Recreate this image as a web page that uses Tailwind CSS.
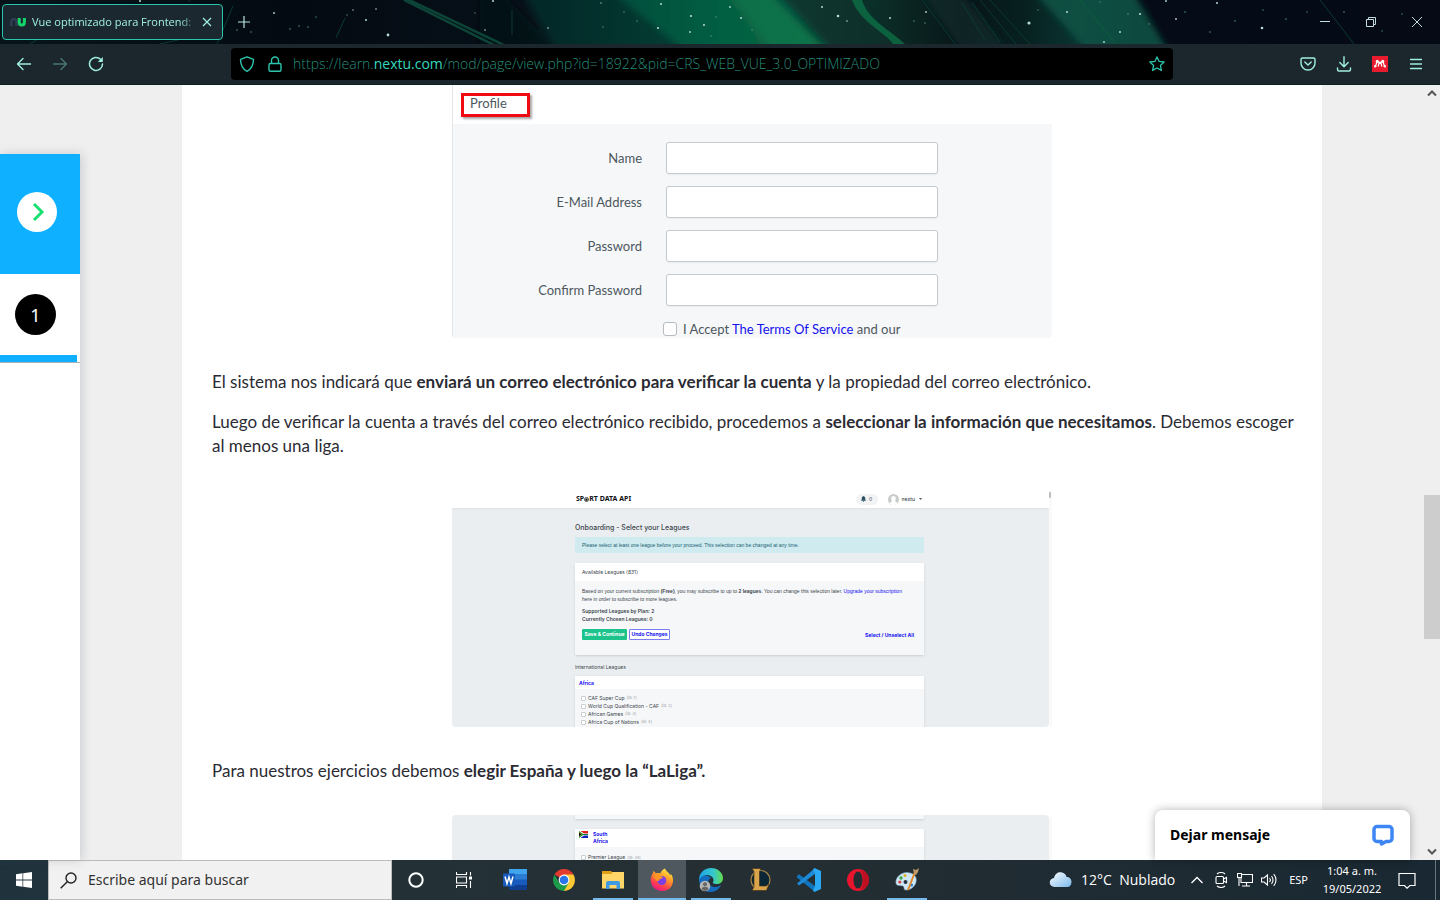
<!DOCTYPE html>
<html lang="es">
<head>
<meta charset="utf-8">
<title>Vue optimizado para Frontend</title>
<script src="https://cdn.jsdelivr.net/npm/@tailwindcss/browser@4"></script>
</head>
<body class="flex h-screen flex-col overflow-hidden bg-[#efefef] font-['Noto_Sans','Open_Sans',sans-serif]">

<!-- Tab strip -->
<header class="relative flex h-11 shrink-0 items-center bg-[#050b14] text-[#a0f0e0]">
  <svg class="absolute inset-0 h-full w-full" viewBox="0 0 1440 44" preserveAspectRatio="none" aria-hidden="true">
    <defs>
      <linearGradient id="sky" x1="0" x2="1">
        <stop offset="0" stop-color="#06141a"/><stop offset=".2" stop-color="#040a12"/><stop offset=".36" stop-color="#060f18"/><stop offset=".42" stop-color="#07302c"/><stop offset=".48" stop-color="#08503f"/><stop offset=".55" stop-color="#085440"/><stop offset=".58" stop-color="#0b3a30"/><stop offset=".63" stop-color="#0a2522"/><stop offset=".67" stop-color="#081519"/><stop offset=".71" stop-color="#07201f"/><stop offset=".75" stop-color="#093532"/><stop offset=".79" stop-color="#050c17"/><stop offset="1" stop-color="#050a15"/>
      </linearGradient>
      <linearGradient id="beam" x1="0" x2="1"><stop offset="0" stop-color="#065040"/><stop offset=".8" stop-color="#086a43"/><stop offset="1" stop-color="#0a7347"/></linearGradient>
      <filter id="soft" x="-10%" y="-30%" width="120%" height="160%"><feGaussianBlur stdDeviation="3"/></filter>
    </defs>
    <rect width="1440" height="44" fill="url(#sky)"/>
    <g filter="url(#soft)">
      <path d="M560 54L500 -10H480V54Z" fill="#060f18" opacity=".6"/>
      <path d="M560 54H690L610 -10H520Z" fill="#07302c" opacity=".6"/>
      <path d="M610 -10H765L832 54H690Z" fill="url(#beam)" opacity=".85"/>
      <path d="M725 -10H768L824 54H775Z" fill="#0b7a4c" opacity=".6"/>
      <path d="M775 -10H850L900 54H836Z" fill="#0a2f2a" opacity=".8"/>
      <path d="M920 -10H960L1010 54H965Z" fill="#0b2b2b" opacity=".6"/>
      <path d="M1032 -10H1132L1170 54H1090Z" fill="#0a5345" opacity=".85"/>
    </g>
    <path d="M852 0H862C868 20 890 30 905 44H893C885 32 860 22 852 0Z" fill="#0c6f45" opacity=".8"/>
    <path d="M1080 0L1116 44" stroke="#0b5e3c"/>
    <path d="M405 -2L506 46M404 0L500 48" stroke="#0d4438" stroke-width="2.5" fill="none"/>
    <path d="M233 6L217 44M345 18L336 38M30 44L40 38M160 44L178 40M188 2L190 0M512 10V35M962 3L985 40M972 3L1000 42M1320 0L1354 44" stroke="#0b3a35" fill="none"/>
    <path d="M980 0L1016 44M990 0L1030 44M922 0L955 44M790 0L828 44" stroke="#0d4a3d" stroke-width="1" opacity=".6"/>
    <g fill="#b5d9d4">
      <circle cx="274" cy="13" r=".9"/><circle cx="140" cy="1" r="1"/><circle cx="388" cy="35" r="1.4"/><circle cx="366" cy="20" r="1"/><circle cx="376" cy="9" r=".8"/><circle cx="353" cy="10" r=".7"/><circle cx="485" cy="30" r=".8"/><circle cx="493" cy="1" r="1"/><circle cx="548" cy="28" r=".8"/><circle cx="658" cy="28" r="1.1"/><circle cx="661" cy="4" r="1"/><circle cx="691" cy="16" r="1.1"/><circle cx="704" cy="25" r="1"/><circle cx="690" cy="32" r=".9"/><circle cx="741" cy="18" r="1"/><circle cx="730" cy="7" r=".9"/><circle cx="822" cy="7" r="1"/><circle cx="838" cy="16" r="1.3"/><circle cx="847" cy="21" r=".8"/><circle cx="890" cy="18" r="1"/><circle cx="926" cy="12" r=".9"/><circle cx="1029" cy="23" r="1.6"/><circle cx="1067" cy="12" r="1"/><circle cx="1140" cy="14" r="1.1"/><circle cx="1120" cy="32" r="1"/><circle cx="1217" cy="3" r="1"/><circle cx="1262" cy="28" r="1.3"/><circle cx="1176" cy="19" r=".9"/><circle cx="1104" cy="42" r=".9"/><circle cx="1166" cy="1" r=".9"/>
    </g>
    <g fill="#4e8b83">
      <circle cx="237" cy="30" r=".8"/><circle cx="251" cy="32" r=".8"/><circle cx="290" cy="29" r=".8"/><circle cx="299" cy="26" r=".8"/><circle cx="308" cy="27" r=".8"/><circle cx="316" cy="17" r=".7"/><circle cx="347" cy="15" r=".7"/><circle cx="475" cy="13" r=".7"/><circle cx="601" cy="3" r=".9"/><circle cx="624" cy="12" r=".8"/><circle cx="603" cy="27" r=".8"/><circle cx="637" cy="21" r=".8"/><circle cx="716" cy="17" r=".8"/><circle cx="711" cy="36" r=".8"/><circle cx="752" cy="30" r=".8"/><circle cx="914" cy="21" r=".8"/><circle cx="925" cy="23" r=".8"/><circle cx="1038" cy="10" r=".7"/><circle cx="1100" cy="2" r=".7"/><circle cx="1128" cy="14" r=".8"/><circle cx="1149" cy="24" r=".8"/><circle cx="1185" cy="12" r=".8"/><circle cx="1210" cy="32" r=".8"/><circle cx="1235" cy="21" r=".8"/><circle cx="1263" cy="10" r=".7"/><circle cx="1286" cy="19" r=".8"/><circle cx="1307" cy="12" r=".7"/><circle cx="1344" cy="12" r=".8"/><circle cx="1402" cy="14" r=".7"/><circle cx="1382" cy="31" r=".7"/>
    </g>
  </svg>
  <div class="relative ml-[2px] flex h-9 w-[221px] items-center rounded border border-[#2cc5ae] bg-[#1c282f] pr-[7px] pl-[7px]">
    <svg class="h-4 w-4 shrink-0" viewBox="0 0 16 16" fill="none" stroke-width="2.6" aria-hidden="true"><path d="M1.3 12V8a2.6 3 0 0 1 5.2 0v4" stroke="#2d3d52"/><path d="M9.2 4v4.500a2.600 2.600 0 0 0 5.200 0V4" stroke="#13d66b" stroke-width="3"/></svg>
    <span class="ml-[6px] flex-1 overflow-hidden font-['Open_Sans',sans-serif] text-[11px] whitespace-nowrap [mask-image:linear-gradient(to_right,black_88%,transparent)]">Vue optimizado para Frontend:</span>
    <button aria-label="Cerrar pestaña"><svg class="h-4 w-4" viewBox="0 0 16 16" stroke="currentColor" stroke-width="1.2"><path d="M4 4l8 8M12 4l-8 8"/></svg></button>
  </div>
  <button aria-label="Nueva pestaña" class="relative ml-[13px]"><svg class="h-4 w-4" viewBox="0 0 16 16" stroke="#b7e6df" stroke-width="1.2"><path d="M8 2v12M2 8h12"/></svg></button>
  <div class="relative ml-auto flex text-[#c4dedd]">
    <button aria-label="Minimizar" class="flex w-[46px] justify-center"><svg class="h-4 w-4" viewBox="0 0 16 16" stroke="currentColor"><path d="M3 7.500h10"/></svg></button>
    <button aria-label="Restaurar" class="flex w-[46px] justify-center"><svg class="h-4 w-4" viewBox="0 0 16 16" fill="none" stroke="currentColor"><path d="M3.500 5.500h7v7h-7zM5.500 5.500v-2h7v7h-2"/></svg></button>
    <button aria-label="Cerrar" class="flex w-[46px] justify-center"><svg class="h-4 w-4" viewBox="0 0 16 16" stroke="currentColor"><path d="M3 3l10 10M13 3L3 13"/></svg></button>
  </div>
</header>

<!-- Navigation toolbar -->
<nav class="flex h-[41px] shrink-0 items-center border-b border-[#09221f] bg-[#1c262d] text-[#a0f0e0]">
  <div class="flex w-[231px] shrink-0 gap-5 pl-4">
    <button aria-label="Atrás"><svg class="h-4 w-4" viewBox="0 0 16 16" fill="none" stroke="currentColor" stroke-width="1.4" stroke-linecap="round" stroke-linejoin="round"><path d="M14.500 8h-13M7 2.500L1.500 8 7 13.500"/></svg></button>
    <button aria-label="Adelante" class="text-[#4a7573]"><svg class="h-4 w-4" viewBox="0 0 16 16" fill="none" stroke="currentColor" stroke-width="1.4" stroke-linecap="round" stroke-linejoin="round"><path d="M1.500 8h13M9 2.500L14.500 8 9 13.500"/></svg></button>
    <button aria-label="Recargar"><svg class="h-4 w-4" viewBox="0 0 16 16" fill="none" stroke="currentColor" stroke-width="1.5" stroke-linecap="round"><path d="M12.500 3.200A6.500 6.500 0 1 0 14.500 8"/><path d="M14.800 1v5h-5z" fill="currentColor" stroke="none"/></svg></button>
  </div>
  <div class="flex h-8 w-[942px] items-center rounded bg-black px-2 text-[#2cc5ae]">
    <svg class="h-4 w-4 shrink-0" viewBox="0 0 16 16" fill="none" stroke="currentColor" stroke-width="1.4" stroke-linejoin="round" aria-hidden="true"><path d="M8 .8l6.500 2.500c0 5-1.500 9.500-6.500 12-5-2.500-6.500-7-6.500-12z"/></svg>
    <svg class="ml-3 h-4 w-4 shrink-0" viewBox="0 0 16 16" fill="none" stroke="currentColor" stroke-width="1.400" aria-hidden="true"><rect x="2" y="7.500" width="12" height="7.800" rx="1.500"/><path d="M4.500 7.500v-3a3.500 3.500 0 0 1 7 0v3"/></svg>
    <a href="#" class="ml-[10px] flex-1 font-['Open_Sans',sans-serif] text-sm font-light whitespace-nowrap text-[#278c7a]">https://learn.<span class="font-normal text-[#35d8be]">nextu.com</span>/mod/page/view.php?id=18922&amp;pid=CRS_WEB_VUE_3.0_OPTIMIZADO</a>
    <button aria-label="Añadir a marcadores"><svg class="h-4 w-4" viewBox="0 0 16 16" fill="none" stroke="currentColor" stroke-width="1.300" stroke-linejoin="round"><path d="M8 .9l2.100 4.500 5 .6-3.700 3.400 1 5L8 12l-4.400 2.400 1-5L.9 6l5-.6z"/></svg></button>
  </div>
  <div class="ml-auto flex gap-5 pr-4">
    <button aria-label="Pocket"><svg class="h-4 w-4" viewBox="0 0 16 16" fill="none" stroke="currentColor" stroke-width="1.400" stroke-linecap="round" stroke-linejoin="round"><path d="M2.500 2h11a1.500 1.500 0 0 1 1.500 1.500V7A7 7 0 0 1 1 7V3.500A1.500 1.500 0 0 1 2.500 2z"/><path d="M4.800 6L8 9l3.200-3"/></svg></button>
    <button aria-label="Descargas"><svg class="h-4 w-4" viewBox="0 0 16 16" fill="none" stroke="currentColor" stroke-width="1.400" stroke-linecap="round" stroke-linejoin="round"><path d="M8 .8v9.700M3.800 6.500L8 10.700l4.200-4.200M1.500 12v1.500A1.500 1.500 0 0 0 3 15h10a1.500 1.500 0 0 0 1.500-1.500V12"/></svg></button>
    <button aria-label="Mendeley"><svg class="h-4 w-4" viewBox="0 0 16 16" fill="#fff"><rect width="16" height="16" fill="#e81c2e"/><circle cx="5.300" cy="5.300" r="1.500"/><circle cx="10.700" cy="5.300" r="1.500"/><path d="M5 5.500L3.800 9.500M11 5.500l1.200 4M5.800 6L8 6.800l2.200-.8M7 7l-.8 3.500M9 7l.8 3.500" fill="none" stroke="#fff" stroke-width="1.200"/><circle cx="3.200" cy="10.300" r="1.200"/><circle cx="12.800" cy="10.300" r="1.200"/><circle cx="8" cy="6.800" r="1.200"/></svg></button>
    <button aria-label="Menú"><svg class="h-4 w-4" viewBox="0 0 16 16" stroke="currentColor" stroke-width="1.300" stroke-linecap="round"><path d="M2.500 3.500h11M2.500 8h11M2.500 12.500h11"/></svg></button>
  </div>
</nav>

<!-- Web page -->
<div class="relative flex min-h-0 flex-1">
  <aside class="relative mt-[69px] flex w-20 shrink-0 flex-col bg-white shadow-[2px_0_10px_rgba(60,70,90,0.2)]">
    <div class="flex h-[120px] items-center bg-[#0fb0ff] pb-1 pl-[17px]">
      <button aria-label="Abrir menú" class="flex h-10 w-10 items-center justify-center rounded-full bg-white"><svg class="h-5 w-5" viewBox="0 0 20 20" fill="none" stroke="#17e070" stroke-width="3"><path d="M7 2l8 8-8 8"/></svg></button>
    </div>
    <div class="flex h-[89px] flex-col border-b border-[#aab3ba]">
      <div class="flex flex-1 items-center pl-[15px]"><a href="#" class="flex h-[41px] w-[41px] items-center justify-center rounded-full bg-black text-lg text-white">1</a></div>
      <div class="h-[7px] w-[77px] bg-[#0fb0ff]"></div>
    </div>
  </aside>

  <main class="min-w-0 flex-1 overflow-hidden">
    <article class="mx-auto h-full max-w-[1140px] overflow-hidden bg-white px-[30px] font-[Lato,sans-serif] text-[17px] leading-6 text-[#2b2b33]">

      <!-- Registration form -->
      <figure class="mx-auto h-[253px] w-[600px] overflow-hidden rounded-b border-l border-[#e3e6e9] text-[13px] leading-5 text-[#4d575d]">
        <div class="h-[39px] pt-2 pl-2">
          <div class="h-6 w-[69px] border-3 border-[#f00a12] pl-[6px] leading-[15px] shadow-[2px_2px_2px_rgba(0,0,0,0.35)]">Profile</div>
        </div>
        <form class="h-full bg-[#f6f7f9] pt-[18px]">
          <div class="grid grid-cols-[189px_272px] items-center gap-x-6 gap-y-3">
            <label for="name" class="text-right">Name</label><input id="name" type="text" class="h-8 rounded-[3px] border border-[#c5cacf] bg-white px-2 shadow-xs">
            <label for="email" class="text-right">E-Mail Address</label><input id="email" type="email" class="h-8 rounded-[3px] border border-[#c5cacf] bg-white px-2 shadow-xs">
            <label for="pass" class="text-right">Password</label><input id="pass" type="password" class="h-8 rounded-[3px] border border-[#c5cacf] bg-white px-2 shadow-xs">
            <label for="confirm" class="text-right">Confirm Password</label><input id="confirm" type="password" class="h-8 rounded-[3px] border border-[#c5cacf] bg-white px-2 shadow-xs">
          </div>
          <div class="mt-[13px] flex items-center gap-[6px] pl-[210px]">
            <input id="terms" type="checkbox" class="h-[14px] w-[14px] appearance-none rounded-[3px] border border-[#b5bbc0] bg-white">
            <label for="terms">I Accept <a href="#" class="text-[#1510ee]">The Terms Of Service</a> and our</label>
          </div>
        </form>
      </figure>

      <p class="mt-8">El sistema nos indicará que <b>enviará un correo electrónico para verificar la cuenta</b> y la propiedad del correo electrónico.</p>
      <p class="mt-4 -mr-2">Luego de verificar la cuenta a través del correo electrónico recibido, procedemos a <b>seleccionar la información que necesitamos</b>. Debemos escoger al menos una liga.</p>

      <!-- League selection -->
      <figure class="mx-auto mt-8 flex h-[237px] w-[600px] font-[Inter,sans-serif] text-[5px] leading-[8px] text-[#3b464d]">
        <div class="flex-1 overflow-hidden rounded-b bg-[#ebeef1]">
          <div class="flex h-[18px] items-center bg-white pr-[127px] pl-[124px] shadow-xs">
            <span class="flex items-center font-['Noto_Sans',sans-serif] text-[7px] font-bold text-[#111]">SP<svg class="h-[5px] w-[5px]" viewBox="0 0 10 10" aria-hidden="true"><circle cx="5" cy="5" r="4" fill="#fff" stroke="#111" stroke-width="1.500"/><path d="M5 2.500l2.500 2-1 3h-3l-1-3z" fill="#111"/></svg>RT DATA API</span>
            <span class="ml-auto flex h-[11px] w-[22px] items-center justify-center gap-[3px] rounded-full bg-[#f1f3f5]"><svg class="h-[6px] w-[5px]" viewBox="0 0 10 12" fill="#2f5060" aria-hidden="true"><path d="M5 0a1 1 0 0 1 1 1c2 .5 2.500 2 2.500 4v2L10 9.500H0L1.500 7V5C1.500 3 2 1.500 4 1a1 1 0 0 1 1-1zM3.500 10h3L5 12z"/></svg>0</span>
            <svg class="ml-[10px] h-[11px] w-[11px]" viewBox="0 0 22 22" aria-hidden="true"><circle cx="11" cy="11" r="11" fill="#c9cccc"/><path d="M11 4c4 0 5 3 4.500 6-.3 2-1 3-1.500 4 0 2 4 2 5 4-2 3-5 4-8 4s-6-1-8-4c1-2 5-2 5-4-.5-1-1.200-2-1.500-4C6 7 7 4 11 4z" fill="#fff"/></svg>
            <span class="ml-[3px] font-medium">nextu</span><svg class="ml-1 h-[2px] w-[3px]" viewBox="0 0 6 4" fill="#555" aria-hidden="true"><path d="M0 0h6L3 4z"/></svg>
          </div>
          <div class="pr-[125px] pl-[123px]">
            <h2 class="pt-4 text-[7px] font-medium">Onboarding - Select your Leagues</h2>
            <div class="mt-[5px] h-4 bg-[#cfebf0] pl-[7px] font-['Liberation_Sans',sans-serif] leading-4 text-[#1c6070]">Please select at least one league before your proceed. This selection can be changed at any time.</div>
            <section class="mt-[10px] h-[92px] bg-[#f6f7f9] shadow-sm">
              <h3 class="h-[18px] bg-white pl-[7px] leading-[18px]">Available Leagues (831)</h3>
              <div class="px-[7px] pt-[6px]">
                <p class="font-['Liberation_Sans',sans-serif]">Based on your current subscription <b>(Free)</b>, you may subscribe to up to <b>2 leagues</b>. You can change this selection later. <a href="#" class="text-[#1510ee]">Upgrade your subscription</a><br>here in order to subscribe to more leagues.</p>
                <p class="mt-1 font-semibold">Supported Leagues by Plan: 2<br>Currently Chosen Leagues: 0</p>
                <div class="mt-[6px] flex items-center gap-[2px] font-bold">
                  <button class="h-[11px] w-[45px] rounded-[1px] bg-[#1cc48c] leading-[11px] text-white">Save &amp; Continue</button>
                  <button class="h-[11px] w-[41px] rounded-[1px] border border-[#7b7bf3] bg-white leading-[9px] text-[#1510ee]">Undo Changes</button>
                  <a href="#" class="mr-[3px] ml-auto text-[#1510ee]">Select / Unselect All</a>
                </div>
              </div>
            </section>
            <h3 class="mt-2">International Leagues</h3>
            <section class="mt-[5px] h-[60px] bg-[#f6f7f9] shadow-sm">
              <h4 class="h-[13px] bg-white pl-1 leading-[15px] font-bold text-[#1510ee]">Africa</h4>
              <div class="flex flex-col pt-[5px] pl-[6px]">
                <label class="flex h-2 items-center gap-[2px]"><input type="checkbox" class="h-[5px] w-[5px] appearance-none rounded-[1px] border border-[#c9ced2] bg-white">CAF Super Cup <small class="text-[4px] text-[#9aa2a8]">(id: 1)</small></label>
                <label class="flex h-2 items-center gap-[2px]"><input type="checkbox" class="h-[5px] w-[5px] appearance-none rounded-[1px] border border-[#c9ced2] bg-white">World Cup Qualification - CAF <small class="text-[4px] text-[#9aa2a8]">(id: 2)</small></label>
                <label class="flex h-2 items-center gap-[2px]"><input type="checkbox" class="h-[5px] w-[5px] appearance-none rounded-[1px] border border-[#c9ced2] bg-white">African Games <small class="text-[4px] text-[#9aa2a8]">(id: 3)</small></label>
                <label class="flex h-2 items-center gap-[2px]"><input type="checkbox" class="h-[5px] w-[5px] appearance-none rounded-[1px] border border-[#c9ced2] bg-white">Africa Cup of Nations <small class="text-[4px] text-[#9aa2a8]">(id: 4)</small></label>
              </div>
            </section>
          </div>
        </div>
        <div class="w-[3px] bg-[#fafafa]"><div class="mt-[2px] h-[6px] w-[2px] rounded-full bg-[#bdbdbd]"></div></div>
      </figure>

      <p class="mt-8">Para nuestros ejercicios debemos <b>elegir España y luego la “LaLiga”.</b></p>

      <!-- Country list -->
      <figure class="mx-auto mt-8 flex h-[237px] w-[600px] font-[Inter,sans-serif] text-[5px] leading-[7px] text-[#3b464d]">
        <div class="flex-1 rounded-t bg-[#ebeef1] pr-[125px] pl-[123px]">
          <div class="h-1 bg-[#f6f7f9] shadow-sm"></div>
          <section class="mt-[10px] h-full bg-[#f6f7f9] shadow-sm">
            <div class="flex h-[18px] items-start gap-[5px] bg-white pt-[2px] pl-1">
              <svg class="h-[7px] w-[9px]" viewBox="0 0 18 14" aria-hidden="true"><path fill="#e02020" d="M0 0h18v6H0z"/><path fill="#1020c0" d="M0 8h18v6H0z"/><path fill="#fff" d="M0 0h3l7 5h8v4h-8l-7 5H0z"/><path fill="#0a8a3a" d="M0 0l8 6h10v2H8l-8 6z"/><path fill="#f0c020" d="M0 2l6 5-6 5z"/><path fill="#111" d="M0 3l5 4-5 4z"/></svg>
              <b class="text-[#1510ee]">South<br>Africa</b>
            </div>
            <label class="mt-[6px] flex h-2 items-center gap-[2px] pl-[6px]"><input type="checkbox" class="h-[5px] w-[5px] appearance-none rounded-[1px] border border-[#c9ced2] bg-white">Premier League <small class="text-[4px] text-[#9aa2a8]">(id: 36)</small></label>
          </section>
        </div>
        <div class="w-[3px] bg-[#fafafa]"></div>
      </figure>
    </article>
  </main>

  <!-- Scrollbar -->
  <div class="flex w-4 shrink-0 flex-col text-[#555]">
    <button aria-label="Subir" class="flex h-4 items-center justify-center"><svg class="h-3 w-3" viewBox="0 0 12 12" fill="none" stroke="currentColor" stroke-width="2"><path d="M2 8.500l4-4 4 4"/></svg></button>
    <div class="flex flex-1 flex-col"><div class="basis-[53%]"></div><div class="h-36 bg-[#cdcdcd]"></div></div>
    <button aria-label="Bajar" class="flex h-4 items-center justify-center"><svg class="h-3 w-3" viewBox="0 0 12 12" fill="none" stroke="currentColor" stroke-width="2"><path d="M2 3.500l4 4 4-4"/></svg></button>
  </div>

  <!-- Chat widget -->
  <button class="absolute right-[30px] bottom-0 flex h-[50px] w-[255px] items-center justify-between rounded-t-lg bg-white px-[15px] text-sm font-bold text-black shadow-[0_0_10px_rgba(0,0,0,0.3)]">
    Dejar mensaje
    <svg class="h-6 w-6" viewBox="0 0 24 24" fill="none" stroke="#3f86f5" stroke-width="3.500" stroke-linejoin="round" aria-hidden="true"><path d="M6 3.500h12a3 3 0 0 1 3 3v9a3 3 0 0 1-3 3h-3L10.500 21v-2.500H6a3 3 0 0 1-3-3v-9a3 3 0 0 1 3-3z"/></svg>
  </button>
</div>

<!-- Taskbar -->
<footer class="flex h-10 shrink-0 items-center bg-linear-to-r from-[#20333c] via-[#252f33] to-[#192832] text-white">
  <button aria-label="Inicio" class="flex h-10 w-12 items-center justify-center"><svg class="h-4 w-4" viewBox="0 0 16 16" fill="#fff"><path d="M0 2.200l6.500-.9v6.300H0zM7.200 1.200L16 0v7.600H7.200zM0 8.400h6.500v6.300L0 13.800zM7.200 8.400H16V16l-8.800-1.200z"/></svg></button>
  <label class="flex h-10 w-[344px] items-center border border-[#bcbcbc] bg-[#f1f1f1] pl-[11px]">
    <svg class="h-[17px] w-[17px] shrink-0" viewBox="0 0 17 17" fill="none" stroke="#222" stroke-width="1.400" aria-hidden="true"><circle cx="11" cy="6" r="5"/><path d="M7.500 9.500L.7 16.300"/></svg>
    <input type="text" aria-label="Buscar" placeholder="Escribe aquí para buscar" class="ml-[11px] flex-1 bg-transparent text-sm text-[#333] outline-none placeholder:text-[#333]">
  </label>
  <button aria-label="Cortana" class="flex h-10 w-12 items-center justify-center"><svg class="h-4 w-4" viewBox="0 0 16 16" fill="none" stroke="#fff" stroke-width="2"><circle cx="8" cy="8" r="6.700"/></svg></button>
  <button aria-label="Vista de tareas" class="mr-[3px] flex h-10 w-12 items-center justify-center"><svg class="h-4 w-4" viewBox="0 0 16 16" fill="none" stroke="#fff" stroke-width="1.100"><path d="M.5 0v2.500h10V0M.5 16v-2.500h10V16M.5 5h10v6H.5zM14.500 0v3.500M14.500 9v7"/><path d="M13 4.500h3v3h-3z" fill="#fff" stroke="none"/></svg></button>
  <div class="flex gap-px">
    <button aria-label="Word" class="flex h-10 w-12 items-center justify-center"><svg class="h-6 w-6" viewBox="0 0 24 24"><path fill="#41a5ee" d="M6 1h18v6H6z"/><path fill="#2b7cd3" d="M6 6h18v6H6z"/><path fill="#185abd" d="M6 11.500h18v6H6z"/><path fill="#103f91" d="M6 17h18v5H6z"/><rect y="5.500" width="12" height="13" rx="1" fill="#185abd"/><path d="M2 8.500l2 7 2-6.500 2 6.500 2-7" fill="none" stroke="#fff" stroke-width="1.500"/></svg></button>
    <button aria-label="Chrome" class="flex h-10 w-12 items-center justify-center"><svg class="h-6 w-6" viewBox="0 0 24 24"><path fill="#e33b2e" d="M12 12L2.500 6.500a11 11 0 0 1 19 0z"/><path fill="#fcc934" d="M12 12V6.500h9.500A11 11 0 0 1 12 23z"/><path fill="#1e9a4b" d="M12 12l4.700 2.800L12 23A11 11 0 0 1 2.500 6.500L7.300 15z"/><circle cx="12" cy="12" r="5.400" fill="#fff"/><circle cx="12" cy="12" r="4.300" fill="#2a76e8"/></svg></button>
    <button aria-label="Explorador" class="relative flex h-10 w-12 items-center justify-center"><svg class="h-6 w-6" viewBox="0 0 24 24"><path fill="#e0a015" d="M1 3h9l2 2v3H1z"/><path fill="#ffd667" d="M1 6l9 0 1.500-2H23v16.500H1z"/><path fill="#3d9ae3" d="M5 15a2 2 0 0 1 2-2h10a2 2 0 0 1 2 2v6h-3.500v-4h-7v4H5z"/></svg><i class="absolute bottom-0 left-1 h-[2px] w-10 bg-[#76b9ed]"></i></button>
    <button aria-label="Firefox" class="relative flex h-10 w-12 items-center justify-center bg-[#4e585e]"><svg class="h-6 w-6" viewBox="0 0 24 24"><defs><linearGradient id="fx" x1=".8" y1="0" x2=".3" y2="1"><stop offset="0" stop-color="#fff24a"/><stop offset=".4" stop-color="#ff9a28"/><stop offset=".75" stop-color="#ff3d4e"/><stop offset="1" stop-color="#e5178e"/></linearGradient></defs><path fill="url(#fx)" d="M15 .5c1 3 4 4 5.500 7 .5-1 .4-1.500.3-2C24 10 23.500 15 21 19c-4 5-12 5.500-17 1C-.5 15.500.2 8 3 5l.3-2.300L6 5.300c2-.6 3-.3 4.500 0C11 3 13 1.500 15 .5z"/><circle cx="11.800" cy="12.500" r="4.500" fill="#7b3fe4"/><path fill="#ff9525" d="M3 8c2-2 5-2 7 0l3 1c-.5 1.500-3 2-3.500 2.500C9 13 7 14 6 12z"/></svg><i class="absolute bottom-0 left-0 h-[2px] w-12 bg-[#76b9ed]"></i></button>
    <button aria-label="Edge" class="relative flex h-10 w-12 items-center justify-center"><svg class="h-6 w-6" viewBox="0 0 24 24"><defs><linearGradient id="ed" x1="0" x2="1"><stop offset="0" stop-color="#1ba4e8"/><stop offset=".6" stop-color="#35c8cc"/><stop offset="1" stop-color="#63dc4c"/></linearGradient></defs><path fill="#136cbd" d="M0 12C1 6 9 6 12 10c-3 1-4 6 0 8 3 2 7 1 10-1-3 7-11 9-17 5C2 20 0 16 0 12z"/><path fill="url(#ed)" d="M0 12C0 5 5 0 12 0s12 5 12 10c0 4-3 6-6 6-4 0-5-1-3.500-3C15 9 11 6.500 7 7c-4 .5-6 3-7 5z"/><circle cx="6" cy="18" r="5.300" fill="#b5b5b5"/><circle cx="6" cy="16.300" r="2" fill="#666"/><path fill="#666" d="M2.500 21c.5-3 6.500-3 7 0-2 2.500-5 2.500-7 0z"/></svg><i class="absolute bottom-0 left-1 h-[2px] w-10 bg-[#76b9ed]"></i></button>
    <button aria-label="League of Legends" class="flex h-10 w-12 items-center justify-center"><svg class="h-6 w-6" viewBox="0 0 24 24"><circle cx="12.500" cy="12" r="9.500" fill="#0b2736" stroke="#a88748" stroke-width="1.200"/><path fill="#d9a44b" stroke="#3d2912" stroke-width=".6" d="M4 .5h9l-1.500 3V18H18l3-2-2.500 6.500H4L6 19V3.500z"/></svg></button>
    <button aria-label="Visual Studio Code" class="flex h-10 w-12 items-center justify-center"><svg class="h-6 w-6" viewBox="0 0 24 24"><path fill="#0f74bd" d="M0 8l2-1.700L18 18v6L0 9.500z"/><path fill="#1c8ad6" d="M0 15.500L18 0v6L2 17.500z"/><path fill="#2ba8f4" d="M17.500 0L24 3v18l-6.500 3L16 22.500 18 18V6l-2-4.500z"/></svg></button>
    <button aria-label="Opera" class="flex h-10 w-12 items-center justify-center"><svg class="h-6 w-6" viewBox="0 0 24 24"><path fill="#e8152c" fill-rule="evenodd" d="M12 1a11 11 0 1 1 0 22 11 11 0 0 1 0-22zm0 2.500C9 3.500 7.500 8 7.500 12S9 20.500 12 20.500s4.500-4.500 4.500-8.500S15 3.500 12 3.500z"/><path fill="#a30d1d" d="M14 2.800c6 0 9 4 9 9.200s-3 9.200-9 9.200c2-2 3-5 3-9.200s-1-7.200-3-9.200z" opacity=".6"/></svg></button>
    <button aria-label="Paint" class="relative flex h-10 w-12 items-center justify-center"><svg class="h-6 w-6" viewBox="0 0 24 24"><path fill="#cfe6f5" stroke="#8bb4d0" stroke-width=".6" d="M1 13C2 7 9 3 15 5c5 1 7 5 6 9-1 5-6 8-10 8-3 0-1-3-3-4s-8 1-7-5z"/><circle cx="6" cy="10" r="1.700" fill="#3da548"/><circle cx="10" cy="7.500" r="1.500" fill="#e0b020"/><circle cx="4.800" cy="14" r="1.600" fill="#d84040"/><circle cx="10.500" cy="14" r="2" fill="#24333a"/><circle cx="16.500" cy="17" r="1.600" fill="#2580dd"/><path d="M20 4l-7 18" stroke="#e28a2b" stroke-width="2"/><path fill="#bd9868" d="M18 1l3 1 3-2-1 4-2 3-2-1z"/></svg><i class="absolute bottom-0 left-1 h-[2px] w-10 bg-[#76b9ed]"></i></button>
  </div>
  <div class="ml-auto flex items-center">
    <button class="flex items-center font-['Open_Sans',sans-serif] text-sm whitespace-pre"><svg class="mr-2 h-6 w-6" viewBox="0 0 24 24" aria-hidden="true"><defs><linearGradient id="cl" x2="1" y2="1"><stop offset="0" stop-color="#fff"/><stop offset="1" stop-color="#79b9ec"/></linearGradient></defs><path fill="url(#cl)" d="M5.500 19a4.500 4.500 0 0 1-.5-9C6 5 10 3.500 13 4.500c3 .7 4.500 3 4.500 4.500 3 0 5 2 5 5s-2 5-4 5z"/></svg>12°C  Nublado</button>
    <button aria-label="Mostrar iconos ocultos" class="ml-[14px]"><svg class="h-4 w-4" viewBox="0 0 16 16" fill="none" stroke="#fff" stroke-width="1.300"><path d="M2.500 11L8 5.500l5.500 5.500"/></svg></button>
    <button aria-label="Cámara" class="ml-2"><svg class="h-4 w-4" viewBox="0 0 16 16" fill="none" stroke="#fff" stroke-width="1.100"><rect x="3" y="4.500" width="7.500" height="7" rx="1"/><path d="M10.500 7l3-1.500v5l-3-1.500M4 2c2-2 6-2 8 0M4 14c2 2 6 2 8 0"/></svg></button>
    <button aria-label="Red" class="ml-2"><svg class="h-4 w-4" viewBox="0 0 16 16" fill="none" stroke="#fff" stroke-width="1.100"><path d="M5 2.500h10.500v8H4V6M9.500 10.500V14M5 14h8M.5 1.500h4v4h-4zM2 5.500V14"/></svg></button>
    <button aria-label="Volumen" class="ml-2"><svg class="h-4 w-4" viewBox="0 0 16 16" fill="none" stroke="#fff" stroke-width="1.100"><path d="M.5 6v4H3l3.500 3V3L3 6zM8.500 6a3 3 0 0 1 0 4M10.500 4.200a5.500 5.500 0 0 1 0 7.600M12.700 2.200a8.500 8.500 0 0 1 0 11.600"/></svg></button>
    <button class="ml-3 text-[11px]">ESP</button>
    <button class="ml-[14px] w-[60px] text-center text-[11px] leading-[18px] whitespace-nowrap">1:04 a. m.<br>19/05/2022</button>
    <button aria-label="Notificaciones" class="mr-[19px] ml-4"><svg class="h-[18px] w-[18px]" viewBox="0 0 18 18" fill="none" stroke="#fff" stroke-width="1.200"><path d="M1 2.500h16v12h-5L9 17.200 6.500 14.500H1z"/></svg></button>
    <button aria-label="Mostrar escritorio" class="h-10 w-[5px] border-l border-[#68757b]"></button>
  </div>
</footer>
</body>
</html>
